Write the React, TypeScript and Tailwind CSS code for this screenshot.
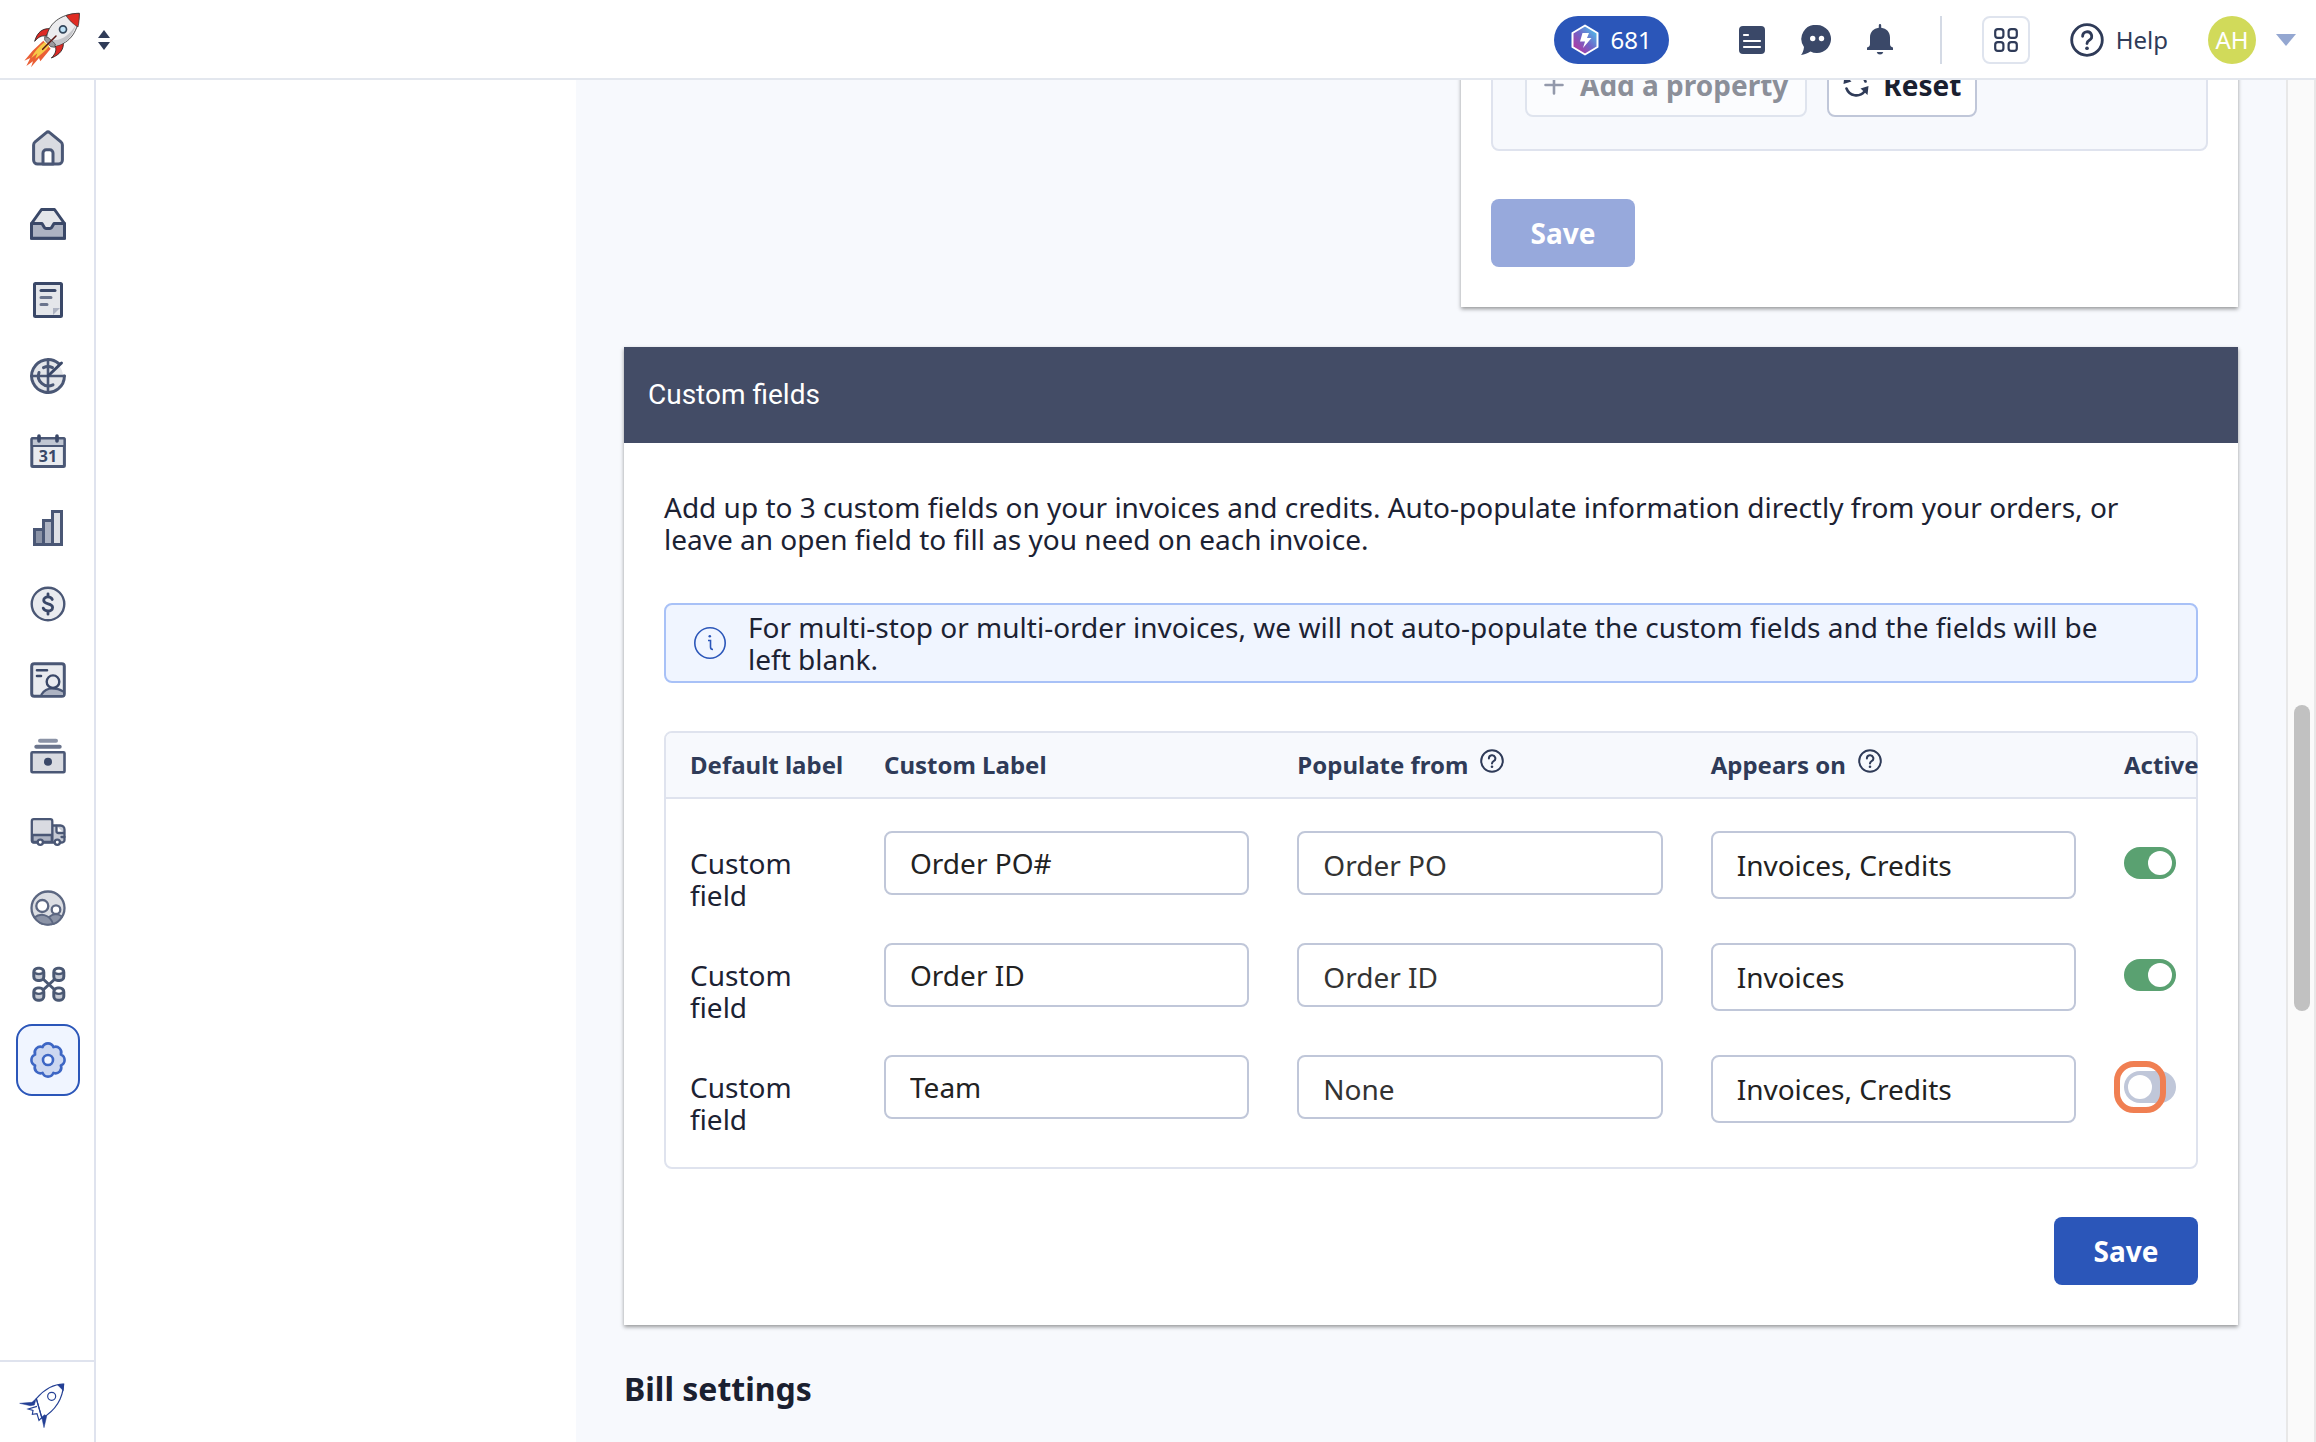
import React, { useState } from "react";

interface CustomField {
  id: number;
  label: string;
  source: string;
  appearsOn: string;
  active: boolean;
}

interface NavItem {
  name: string;
  icon: React.ReactNode;
}

const initialFields: CustomField[] = [
  { id: 1, label: "Order PO#", source: "Order PO", appearsOn: "Invoices, Credits", active: true },
  { id: 2, label: "Order ID", source: "Order ID", appearsOn: "Invoices", active: true },
  { id: 3, label: "Team", source: "None", appearsOn: "Invoices, Credits", active: false },
];

const sources = ["None", "Order PO", "Order ID"];
const documents = ["Invoices", "Credits", "Invoices, Credits"];

const navItems: NavItem[] = [
  {
    name: "Home",
    icon: (
      <>
        <path d="M16.3 2.6a2.6 2.6 0 0 1 3.4 0l11.2 9.2a4 4 0 0 1 1.5 3.1V30a4 4 0 0 1-4 4H7.6a4 4 0 0 1-4-4V14.9a4 4 0 0 1 1.5-3.1Z" fill="#d9dbe1" />
        <path d="M13 34V23a3.2 3.2 0 0 1 3.2-3.2h3.6A3.2 3.2 0 0 1 23 23v11Z" fill="#fff" />
      </>
    ),
  },
  {
    name: "Inbox",
    icon: (
      <g stroke="#3a4868">
        <path d="M11.5 3.5h13l10 14v14.7h-33V17.5Z" fill="#e4e6ea" />
        <path d="M1.500 17.5H12l2.500 4.200q.6.800 1.500.8h4q.9 0 1.500-.8l2.500-4.200h10.500v14.700h-33Z" fill="#adb3c2" />
      </g>
    ),
  },
  {
    name: "Orders",
    icon: (
      <g stroke="#3a4868">
        <rect x="4.5" y="1.5" width="27" height="33" rx="1" fill="#e4e6ea" />
        <path d="M23 33v-7h7Z" fill="#adb3c2" stroke="none" />
        <path d="M11 8.500h14" />
        <path d="M11 15.500h10M11 22.500h6" stroke="#6a748c" />
      </g>
    ),
  },
  {
    name: "Tracking",
    icon: (
      <>
        <circle cx="18" cy="18" r="15" fill="#e4e6ea" stroke="none" />
        <path d="M34.4 18A16.4 16.4 0 1 1 28.6 5.500" />
        <path d="M1.5 18h33M18 1.5v33" strokeWidth="2.6" />
        <path d="M9 14.5a10 10 0 0 0 14 12.3M13.5 9.6a10 10 0 0 1 9 0" />
        <path d="M18 18 31.5 5" stroke="#3a4868" />
      </>
    ),
  },
  {
    name: "Calendar",
    icon: (
      <>
        <rect x="1.8" y="4.5" width="32.6" height="28" rx="1" fill="#e9ebef" />
        <path d="M1.8 4.5h32.6v7.500H1.800Z" fill="#c0c6d2" strokeWidth="2" />
        <path d="M9 2v5M27 2v5" stroke="#3a4868" strokeWidth="3.6" />
        <text x="18" y="28" textAnchor="middle" fontSize="16" fontWeight="700" fill="#3a4868" stroke="none">
          31
        </text>
      </>
    ),
  },
  {
    name: "Reports",
    icon: (
      <g strokeLinejoin="miter">
        <path d="M4.5 19.5h9v15h-9Z" fill="#8b93a6" />
        <path d="M13.5 10.5h9v24h-9Z" fill="#adb3c2" />
        <path d="M22.5 1.5h9v33h-9Z" fill="#dfe1e6" />
      </g>
    ),
  },
  {
    name: "Billing",
    icon: (
      <>
        <circle cx="18" cy="18" r="16.3" fill="#e9ebef" strokeWidth="2.4" />
        <path
          d="M22.3 13.5c-.6-1.700-2.200-2.600-4.300-2.600-2.400 0-4.300 1.300-4.300 3.400 0 4.900 8.900 2.300 8.900 7.200 0 2.100-2 3.500-4.600 3.500-2.400 0-4.100-1-4.800-2.900M18 7.800v3M18 25.200v3"
          stroke="#3a4868"
          strokeWidth="2.8"
        />
      </>
    ),
  },
  {
    name: "Customers",
    icon: (
      <>
        <rect x="1.7" y="1.7" width="32.6" height="32.6" rx="2.5" fill="#e9ebef" />
        <path d="M11.5 33c2.500-4.800 6.500-6.500 11-6.500s7.500 1 10.500 3V33Z" fill="#adb3c2" stroke="none" />
        <path d="M11.5 32.5c2.500-4.500 6.500-6.200 11-6.200s7.500 1 10.500 3" strokeWidth="2.2" />
        <circle cx="23" cy="19.7" r="6.3" fill="#e9ebef" stroke="#3a4868" strokeWidth="2.4" />
        <path d="M7 8.300h10M7 14h4" stroke="#3a4868" strokeWidth="2.6" />
      </>
    ),
  },
  {
    name: "Payments",
    icon: (
      <>
        <path d="M10 2.800h16" stroke="#8b93a6" strokeWidth="4" />
        <path d="M6.3 8.800h23.400" stroke="#6a748c" strokeWidth="4" />
        <rect x="1.5" y="14.2" width="33" height="20" rx="1" fill="#d9dbe1" strokeWidth="2.6" />
        <circle cx="18" cy="23.8" r="4" fill="#3a4868" stroke="none" />
      </>
    ),
  },
  {
    name: "Fleet",
    icon: (
      <g strokeWidth="2.3">
        <path d="M22 11.5h8.500a4 4 0 0 1 4 4V26a2.500 2.500 0 0 1-2.500 2.500H22Z" fill="#c6cad4" />
        <rect x="1.8" y="5.2" width="20.5" height="23.3" rx="2" fill="#d9dbe1" />
        <path d="M2.5 21h19.300v7H2.500Z" fill="#adb3c2" />
        <path d="M26.5 12v5a2 2 0 0 0 2 2h5.500M34.500 23h-3" fill="#fff" />
        <circle cx="10.3" cy="28.2" r="2.6" fill="#fff" />
        <circle cx="27.3" cy="28.2" r="2.6" fill="#fff" />
      </g>
    ),
  },
  {
    name: "Users",
    icon: (
      <g stroke="#5c6781" strokeWidth="2.3">
        <circle cx="18" cy="18" r="16.5" fill="#dcdee3" />
        <path d="M19 27c4-3.500 9-3.500 13-.5-2 4-6 7-10.500 7.800Z" fill="#8b93a6" strokeWidth="1.8" />
        <path d="M4.5 27.500c5-4.500 15-4 18.500 6.200-7.500 2.300-14 .3-18.500-6.200Z" fill="#8b93a6" strokeWidth="1.8" />
        <circle cx="12.3" cy="16" r="6" fill="#fff" />
        <circle cx="26" cy="19.7" r="4.3" fill="#fff" />
      </g>
    ),
  },
  {
    name: "Integrations",
    icon: (
      <g stroke="#4a5873">
        <path d="m12 12 14 13M26 12 12 25" strokeWidth="3" />
        {[
          [3.8, 2.2],
          [23.8, 2.2],
          [3.8, 22],
          [23.8, 22],
        ].map(([x, y]) => (
          <g key={`${x}-${y}`}>
            <rect x={x} y={y} width="10" height="12.2" rx="4" fill="#c6cad4" />
            <path d={`M${x + 1} ${y + 4.8}q4 2.400 8 0`} strokeWidth="2.2" />
            <ellipse cx={x + 5} cy={y + 2.9} rx="2.8" ry="1.4" fill="#fff" stroke="none" />
          </g>
        ))}
      </g>
    ),
  },
  {
    name: "Settings",
    icon: (
      <g stroke="#3d66c4" strokeWidth="2.6">
        <path
          d="M12.6 5.1A5.8 5.8 0 0 1 23.4 5.1A5.8 5.8 0 0 1 30.9 12.6A5.8 5.8 0 0 1 30.9 23.4A5.8 5.8 0 0 1 23.4 30.9A5.8 5.8 0 0 1 12.6 30.9A5.8 5.8 0 0 1 5.1 23.4A5.8 5.8 0 0 1 5.1 12.6A5.8 5.8 0 0 1 12.6 5.1Z"
          fill="#ccd7f0"
        />
        <circle cx="18" cy="18" r="5" fill="#f0f5ff" />
      </g>
    ),
  },
];

const ColorRocket: React.FC = () => (
  <svg className="h-14 w-14" viewBox="70 36 168 168" aria-hidden="true">
    <path d="M128 122 96 152l-25 30 18-8-12 24 20-14-6 18 24-28 4 10 31-38Z" fill="#ea5f35" />
    <path d="M132 126c-18 14-30 28-40 48l18-14-6 16c16-12 30-22 42-38Z" fill="#f7c948" />
    <path d="M150 86c-24-2-40 10-48 38 10-12 20-18 34-16Z" fill="#dd2a25" stroke="#222" strokeWidth="2.5" />
    <path d="M188 126c2 22-10 38-36 48 12-12 16-22 12-36Z" fill="#dd2a25" stroke="#222" strokeWidth="2.5" />
    <path d="M236 40c-44 0-90 22-98 70l26 28c46-8 70-48 72-98Z" fill="#ececee" stroke="#333" strokeWidth="2.5" />
    <path d="M150 118c30 8 58-14 76-44-10 34-32 58-62 64Z" fill="#c4c5c9" />
    <path d="M236 40c-14 0-28 2-40 7 10 14 22 26 36 34 3-12 4-26 4-41Z" fill="#e02b22" stroke="#333" strokeWidth="2" />
    <path d="m132 110 10 2 22 20-2 10-12-2-18-20Z" fill="#9a9a9e" stroke="#333" strokeWidth="2" />
    <path d="m166 108-40 40" stroke="#5a1512" strokeWidth="4.5" strokeLinecap="round" />
    <circle cx="187" cy="88" r="10.5" fill="#bfe3f8" stroke="#33475c" strokeWidth="5" />
  </svg>
);

const OutlineRocket: React.FC = () => (
  <svg className="h-[46px] w-[46px]" viewBox="56 130 138 138" fill="none" stroke="#233f94" strokeWidth="3.5" aria-hidden="true">
    <path d="M190 133c-34 0-60 18-82 44l17 59c34-20 62-52 65-103Z" />
    <path d="m108 177 17 59M110 200l-26 8 14 4-2 12 14-2 6 20 8-8" />
    <path d="m108 176-13 12-37 3 32 7 12-2ZM124 232l7 32 8-34-6-5ZM190 133l-18 3 17 17Z" fill="#233f94" strokeWidth="1.5" />
    <circle cx="154" cy="170" r="12" />
  </svg>
);

const HelpIcon: React.FC<{ className: string }> = ({ className }) => (
  <svg className={className} viewBox="0 0 24 24" fill="none" stroke="currentColor" strokeWidth="2" strokeLinecap="round" aria-hidden="true">
    <circle cx="12" cy="12" r="10.8" />
    <path d="M8.9 9.4a3.2 3.2 0 1 1 4.7 2.8c-1.100.6-1.600 1.200-1.600 2.300" />
    <circle cx="12" cy="17.8" r="1.3" fill="currentColor" stroke="none" />
  </svg>
);

const TopBar: React.FC = () => (
  <header className="flex h-20 shrink-0 items-center justify-between border-b-2 border-[#e3e7ee] bg-white pt-0.5 pr-5 pl-6 text-[#2f3b58]">
    <button type="button" className="flex items-center gap-[18px]" aria-label="Switch workspace">
      <ColorRocket />
      <svg className="h-5 w-3" viewBox="0 0 12 20" fill="#2f3b58" aria-hidden="true">
        <path d="m6 0 6 8H0ZM6 20l6-8H0Z" />
      </svg>
    </button>

    <div className="flex items-center">
      <button type="button" className="flex h-12 items-center gap-3 rounded-full bg-[#2b56b9] px-[17px] text-2xl text-white">
        <svg className="h-8 w-7" viewBox="0 0 28 32" aria-hidden="true">
          <defs>
            <linearGradient id="credits" x1="0" y1="1" x2="1" y2="0">
              <stop offset="0.2" stopColor="#a63fa8" />
              <stop offset="0.5" stopColor="#6f64c8" />
              <stop offset="0.9" stopColor="#4fc0ea" />
            </linearGradient>
          </defs>
          <path d="M14 1.5 26.5 9v14L14 30.5 1.5 23V9Z" fill="url(#credits)" stroke="#fff" strokeWidth="2" strokeLinejoin="round" />
          <path d="M11.5 9h6.500l-2 5h4.500L12 24l2-6.500H9Z" fill="#fff" />
        </svg>
        681
      </button>

      <button type="button" className="ml-[70px]" aria-label="Notes">
        <svg className="h-7 w-[26px]" viewBox="0 0 26 28" aria-hidden="true">
          <rect width="26" height="28" rx="4" fill="#3a4868" />
          <path d="M5 9h4M5 15h16M5 21h16" stroke="#fff" strokeWidth="2.2" strokeLinecap="round" />
        </svg>
      </button>
      <button type="button" className="ml-9" aria-label="Chat">
        <svg className="h-[30px] w-[30px]" viewBox="0 0 30 30" aria-hidden="true">
          <path d="M16 0a14 14 0 1 1-6.500 26.400C6.500 28 3.500 29.500 0 30c1.700-2 2.600-4.500 3-8A14 14 0 0 1 16 0Z" fill="#3a4868" />
          <circle cx="11.7" cy="13.5" r="2.7" fill="#fff" />
          <circle cx="20.5" cy="13.5" r="2.7" fill="#fff" />
        </svg>
      </button>
      <button type="button" className="ml-9" aria-label="Notifications">
        <svg className="h-8 w-[26px]" viewBox="0 0 26 32" fill="#3a4868" aria-hidden="true">
          <path d="M13 0a1.200 1.200 0 0 1 1.200 1.200v2.500C19.500 4.400 23 8 23 13.500V20c0 1.800 1 2.800 3 3.500V26H0v-2.500c2-.7 3-1.700 3-3.500v-6.500C3 8 6.500 4.400 11.800 3.700V1.200A1.200 1.200 0 0 1 13 0ZM9.700 28h6.600a3.400 3.400 0 0 1-6.600 0Z" />
        </svg>
      </button>

      <div className="ml-[47px] h-12 w-0.5 bg-[#d4dae5]" />

      <button type="button" className="ml-10 flex h-12 w-12 items-center justify-center rounded-lg border-2 border-[#dfe4ee]" aria-label="Apps">
        <svg className="h-6 w-6" viewBox="0 0 24 24" fill="none" stroke="#2f3b58" strokeWidth="2.2" aria-hidden="true">
          <rect x="1.2" y="1.2" width="8.2" height="8.6" rx="2.6" />
          <rect x="14.6" y="1.2" width="8.2" height="8.6" rx="2.6" />
          <rect x="1.2" y="14.2" width="8.2" height="8.6" rx="2.6" />
          <rect x="14.6" y="14.2" width="8.2" height="8.6" rx="2.6" />
        </svg>
      </button>
      <a href="#help" className="ml-10 flex items-center gap-3 text-2xl">
        <HelpIcon className="h-[34px] w-[34px]" />
        Help
      </a>
      <button type="button" className="ml-10 flex items-center gap-5" aria-label="Account">
        <span className="flex h-12 w-12 items-center justify-center rounded-full bg-[#d1da5a] text-2xl text-white">AH</span>
        <svg className="h-3 w-5" viewBox="0 0 20 12" fill="#94a7d1" aria-hidden="true">
          <path d="M0 0h20L10 12Z" />
        </svg>
      </button>
    </div>
  </header>
);

const SideNav: React.FC = () => (
  <nav className="flex w-24 shrink-0 flex-col justify-between border-r-2 border-[#dfe3ee] bg-white">
    <ul className="flex flex-col gap-1 pt-8 pl-4">
      {navItems.map((item) => (
        <li key={item.name}>
          <a
            href={`#${item.name.toLowerCase()}`}
            aria-label={item.name}
            className={
              item.name === "Settings"
                ? "flex h-[72px] w-16 items-center justify-center rounded-2xl border-2 border-[#2b56b9] bg-[#f0f5ff]"
                : "flex h-[72px] w-16 items-center justify-center"
            }
          >
            <svg
              className="h-9 w-9"
              viewBox="0 0 36 36"
              fill="none"
              stroke="#4a5775"
              strokeWidth="3"
              strokeLinecap="round"
              strokeLinejoin="round"
              aria-hidden="true"
            >
              {item.icon}
            </svg>
          </a>
        </li>
      ))}
    </ul>
    <a href="#about" className="flex h-[82px] items-center border-t-2 border-[#dfe3ee] pt-2 pl-[19px]" aria-label="About">
      <OutlineRocket />
    </a>
  </nav>
);

const PropertyCard: React.FC = () => (
  <section className="-mt-[61px] ml-auto w-[777px] max-w-full bg-white px-[30px] pb-10 shadow-[0_2px_4px_rgba(0,0,0,0.4)]">
    <div className="flex gap-5 rounded-lg border-2 border-[#dfe3ee] bg-[#f7f9fd] p-8">
      <button
        type="button"
        disabled
        className="flex h-16 items-center gap-4 rounded-lg border-2 border-[#dfe4ee] bg-[#fbfcfe] px-[17px] text-[28px] font-bold whitespace-nowrap text-[#8b8f99]"
      >
        <svg className="h-5 w-5" viewBox="0 0 20 20" stroke="#9399ab" strokeWidth="2.6" strokeLinecap="round" aria-hidden="true">
          <path d="M10 1.500v17M1.500 10h17" />
        </svg>
        Add a property
      </button>
      <button
        type="button"
        className="flex h-16 items-center gap-3.5 rounded-lg border-2 border-[#c0c7d9] bg-white px-3.5 text-[28px] font-bold text-[#1a2030]"
      >
        <svg className="h-[26px] w-[26px]" viewBox="0 0 26 26" fill="none" stroke="#2f3b58" strokeWidth="2.6" strokeLinecap="round" aria-hidden="true">
          <path d="M3.5 16.500A10.500 10.500 0 0 0 21.500 19.500M22.500 9.500A10.500 10.500 0 0 0 4.500 6.500" />
          <path d="m25.500 14-1 9-7-6.500ZM.5 12l1-9 7 6.500Z" fill="#2f3b58" stroke="none" />
        </svg>
        Reset
      </button>
    </div>
    <button type="button" disabled className="mt-12 h-[68px] w-36 rounded-lg bg-[#97a9dc] text-[28px] font-bold text-white">
      Save
    </button>
  </section>
);

const fieldStyle =
  "block w-full appearance-none rounded-lg border-2 border-[#c0c7d9] bg-white px-6 text-[28px] leading-8 outline-none";

const FieldsTable: React.FC = () => {
  const [fields, setFields] = useState(initialFields);

  const update = (id: number, changes: Partial<CustomField>) => {
    setFields(fields.map((f) => (f.id === id ? { ...f, ...changes } : f)));
  };

  return (
    <div className="mt-12 rounded-lg border-2 border-[#dfe3ee] pb-8">
      <table className="w-full table-fixed">
        <colgroup>
          <col className="w-[218px]" />
          <col />
          <col />
          <col />
          <col className="w-[72px]" />
        </colgroup>
        <thead>
          <tr className="h-[65px] border-b-2 border-[#dfe3ee] bg-[#f7f9fd] text-left text-2xl whitespace-nowrap text-[#2f3b58]">
            <th className="rounded-tl-md pl-6">Default label</th>
            <th>Custom Label</th>
            <th>
              <span className="flex gap-3">
                Populate from <HelpIcon className="h-6 w-6" />
              </span>
            </th>
            <th>
              <span className="flex gap-3">
                Appears on <HelpIcon className="h-6 w-6" />
              </span>
            </th>
            <th className="rounded-tr-md">Active</th>
          </tr>
        </thead>
        <tbody>
          {fields.map((field) => (
            <tr key={field.id} className="h-28 align-top">
              <td className="pt-12 pr-12 pl-6 leading-8">Custom field</td>
              <td className="pt-8 pr-12">
                <input
                  type="text"
                  aria-label="Custom label"
                  className={`${fieldStyle} h-16 text-[#222]`}
                  value={field.label}
                  onChange={(e) => update(field.id, { label: e.target.value })}
                />
              </td>
              <td className="pt-8 pr-12">
                <select
                  aria-label="Populate from"
                  className={`${fieldStyle} h-16 pt-1 text-[#333]`}
                  value={field.source}
                  onChange={(e) => update(field.id, { source: e.target.value })}
                >
                  {sources.map((s) => (
                    <option key={s}>{s}</option>
                  ))}
                </select>
              </td>
              <td className="pt-8 pr-12">
                <select
                  aria-label="Appears on"
                  className={`${fieldStyle} h-[68px] text-[#222]`}
                  value={field.appearsOn}
                  onChange={(e) => update(field.id, { appearsOn: e.target.value })}
                >
                  {documents.map((d) => (
                    <option key={d}>{d}</option>
                  ))}
                </select>
              </td>
              <td className="pt-12">
                <span className="relative block">
                  <input
                    type="checkbox"
                    aria-label="Active"
                    className="block h-8 w-[52px] appearance-none rounded-full bg-[#c0c7d9] p-1 before:block before:h-6 before:w-6 before:rounded-full before:bg-white checked:bg-[#5aa171] checked:pl-6"
                    checked={field.active}
                    onChange={(e) => update(field.id, { active: e.target.checked })}
                  />
                  {/* highlight round the switch that is still off */}
                  {field.id === 3 && (
                    <span className="pointer-events-none absolute -top-2.5 -left-2.5 h-[52px] w-[52px] rounded-[20px] border-6 border-[#f07f52]" />
                  )}
                </span>
              </td>
            </tr>
          ))}
        </tbody>
      </table>
    </div>
  );
};

const CustomFieldsCard: React.FC = () => (
  <section className="mt-10 bg-white shadow-[0_2px_4px_rgba(0,0,0,0.4)]">
    <h2 className="flex h-24 items-center bg-[#434c66] px-6 font-[Roboto,sans-serif] text-[28px] text-white">
      Custom fields
    </h2>
    <div className="flex flex-col px-10 pt-12 pb-10">
      <p className="pr-10 leading-8">
        Add up to 3 custom fields on your invoices and credits. Auto-populate information directly from your orders, or
        leave an open field to fill as you need on each invoice.
      </p>
      <div className="mt-12 flex items-center gap-[22px] rounded-lg border-2 border-[#a8c1f7] bg-[#f0f5ff] py-1.5 pr-14 pl-7">
        <svg className="h-8 w-8 shrink-0" viewBox="0 0 32 32" fill="none" stroke="#2b56b9" strokeWidth="1.6" aria-hidden="true">
          <circle cx="16" cy="16" r="15.2" />
          <path d="M14 13.500h2.500v6.500q0 2.500 2.500 2.500" />
          <circle cx="15.8" cy="9.3" r="1.3" fill="#2b56b9" stroke="none" />
        </svg>
        <p className="leading-8">
          For multi-stop or multi-order invoices, we will not auto-populate the custom fields and the fields will be
          left blank.
        </p>
      </div>
      <FieldsTable />
      <button type="button" className="mt-12 h-[68px] w-36 self-end rounded-lg bg-[#2b56b9] font-bold text-white">
        Save
      </button>
    </div>
  </section>
);

const App: React.FC = () => (
  <div className="flex h-screen flex-col overflow-hidden bg-white font-['Noto_Sans',sans-serif] text-[28px] text-[#1c2233]">
    <TopBar />
    <div className="flex min-h-0 flex-1">
      <SideNav />
      <aside className="w-[480px] shrink-0 bg-white" />
      <main className="min-w-0 flex-1 overflow-hidden bg-[#f7f9fd] px-12">
        <PropertyCard />
        <CustomFieldsCard />
        <h2 className="mt-11 text-[32px] leading-10 font-bold text-[#1a2030]">Bill settings</h2>
      </main>
      <div className="w-[30px] shrink-0 border-x-2 border-[#e8e8e8] bg-[#fafafa] px-1.5 pt-[625px]">
        <div className="h-[306px] w-4 rounded-full bg-[#c1c1c1]" />
      </div>
    </div>
  </div>
);

export default App;
